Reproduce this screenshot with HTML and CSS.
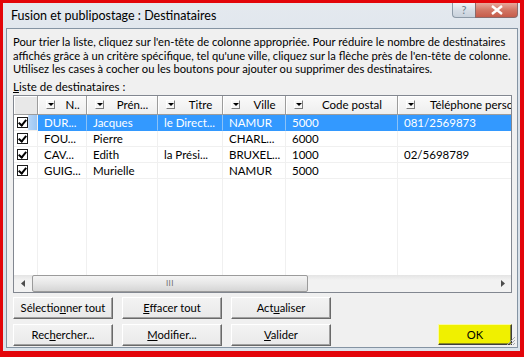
FILE: index.html
```html
<!DOCTYPE html>
<html lang="fr">
<head>
    <meta charset="UTF-8">
    <title>Fusion et publipostage : Destinataires</title>
    <link rel="stylesheet" href="styles.css">
</head>
<body>
    <div class="screen">
        <div class="window">
            <div class="titlebar">
                <span class="title">Fusion et publipostage : Destinataires</span>
                <div class="caption-buttons">
                    <span class="cap-help">?</span>
                    <span class="cap-close">
                        <svg width="12" height="10" viewBox="0 0 12 10"><path d="M1 1 L11 9 M11 1 L1 9" stroke="#fff" stroke-width="2.4" fill="none"/></svg>
                    </span>
                </div>
            </div>

            <div class="client">
                <p class="intro">
                    Pour trier la liste, cliquez sur l'en-tête de colonne appropriée. Pour réduire le nombre de destinataires<br>
                    affichés grâce à un critère spécifique, tel qu'une ville, cliquez sur la flèche près de l'en-tête de colonne.<br>
                    Utilisez les cases à cocher ou les boutons pour ajouter ou supprimer des destinataires.
                </p>
                <div class="list-label"><u>L</u>iste de destinataires :</div>

                <div class="listview">
                    <div class="grid">
                        <div class="th th-check"></div>
                        <div class="th"><span class="dd"></span><span class="th-label">N..</span></div>
                        <div class="th"><span class="dd"></span><span class="th-label">Prén...</span></div>
                        <div class="th"><span class="dd"></span><span class="th-label">Titre</span></div>
                        <div class="th"><span class="dd"></span><span class="th-label">Ville</span></div>
                        <div class="th"><span class="dd"></span><span class="th-label">Code postal</span></div>
                        <div class="th th-last"><span class="dd"></span><span class="th-label left">Téléphone perso</span></div>

                        <div class="td check sel-check"><span class="box"></span></div>
                        <div class="td sel">DUR...</div>
                        <div class="td sel">Jacques</div>
                        <div class="td sel">le Direct...</div>
                        <div class="td sel">NAMUR</div>
                        <div class="td sel">5000</div>
                        <div class="td sel">081/2569873</div>

                        <div class="td check"><span class="box"></span></div>
                        <div class="td">FOU...</div>
                        <div class="td">Pierre</div>
                        <div class="td"></div>
                        <div class="td">CHARL...</div>
                        <div class="td">6000</div>
                        <div class="td"></div>

                        <div class="td check"><span class="box"></span></div>
                        <div class="td">CAV...</div>
                        <div class="td">Edith</div>
                        <div class="td">la Prési...</div>
                        <div class="td">BRUXEL...</div>
                        <div class="td">1000</div>
                        <div class="td">02/5698789</div>

                        <div class="td check"><span class="box"></span></div>
                        <div class="td">GUIG...</div>
                        <div class="td">Murielle</div>
                        <div class="td"></div>
                        <div class="td">NAMUR</div>
                        <div class="td">5000</div>
                        <div class="td"></div>

                        <div class="fill"></div>
                        <div class="fill"></div>
                        <div class="fill"></div>
                        <div class="fill"></div>
                        <div class="fill"></div>
                        <div class="fill"></div>
                        <div class="fill"></div>
                    </div>

                    <div class="hscroll">
                        <span class="arrow">
                            <svg width="4" height="7" viewBox="0 0 4 7"><path d="M4 0 L0 3.5 L4 7 Z" fill="#4d4d4d"/></svg>
                        </span>
                        <div class="track">
                            <div class="thumb"><span class="grip-lines">III</span></div>
                        </div>
                        <span class="arrow">
                            <svg width="4" height="7" viewBox="0 0 4 7"><path d="M0 0 L4 3.5 L0 7 Z" fill="#4d4d4d"/></svg>
                        </span>
                    </div>
                </div>

                <div class="actions">
                    <div class="btn-grid">
                        <button class="btn">Sélectio<u>n</u>ner tout</button>
                        <button class="btn"><u>E</u>ffacer tout</button>
                        <button class="btn">Act<u>u</u>aliser</button>
                        <button class="btn">Rec<u>h</u>ercher...</button>
                        <button class="btn"><u>M</u>odifier...</button>
                        <button class="btn"><u>V</u>alider</button>
                    </div>
                    <button class="btn ok">OK</button>
                </div>

                <svg class="size-grip" width="10" height="10" viewBox="0 0 10 10">
                    <path d="M9 1 L1 9 M9 4 L4 9 M9 7 L7 9" stroke="#a8a8a8" stroke-width="1" fill="none"/>
                </svg>
            </div>
        </div>
    </div>
</body>
</html>
```

FILE: styles.css
```css
* {
    margin: 0;
    padding: 0;
    box-sizing: border-box;
}

body {
    width: 524px;
    height: 357px;
    overflow: hidden;
    font-family: Lato, "Liberation Sans", sans-serif;
    font-size: 11.5px;
    color: #000;
}

.screen {
    height: 357px;
    background: #e3050a;
    padding: 3px 4px 6px 3px;
}

.window {
    height: 100%;
    display: flex;
    flex-direction: column;
    padding: 0 2px 3px 3px;
    background: linear-gradient(180deg, #e4e9ef 0%, #d6dfe8 40%, #dbe3eb 100%);
}

/* title bar */
.titlebar {
    height: 25px;
    flex: none;
    display: flex;
    align-items: flex-start;
}

.title {
    padding: 5px 0 0 5px;
    font-size: 12.5px;
    color: #000;
}

.caption-buttons {
    margin-left: auto;
    display: flex;
}

.cap-help {
    width: 23px;
    height: 15px;
    border: 1px solid #8d9aa7;
    border-right: none;
    border-top: none;
    border-radius: 0 0 0 4px;
    background: linear-gradient(180deg, #f1f4f7, #d7dee6 50%, #c9d2dc);
    color: #6b7a8a;
    font-size: 11px;
    text-align: center;
    line-height: 14px;
}

.cap-close {
    width: 43px;
    height: 15px;
    border: 1px solid #8a6a6a;
    border-top: none;
    border-radius: 0 0 4px 0;
    background: linear-gradient(180deg, #e7a89c, #d27765 50%, #c65c4a);
    display: flex;
    align-items: center;
    justify-content: center;
}

/* client area */
.client {
    flex: 1;
    position: relative;
    display: flex;
    flex-direction: column;
    background: #f0f0f0;
    border: 1px solid #8594a3;
    padding: 6px 5px 0 6px;
}

.intro {
    font-size: 11.2px;
    line-height: 13.5px;
    white-space: nowrap;
}

.list-label {
    margin-top: 4px;
    line-height: 13px;
}

/* list view */
.listview {
    margin-top: 2px;
    height: 198px;
    flex: none;
    border: 1px solid #828790;
    background: #fff;
    display: flex;
    flex-direction: column;
}

.grid {
    flex: 1;
    display: grid;
    grid-template-columns: 24px 49px 71px 65px 63px 112px 140px;
    grid-template-rows: 19px repeat(4, 16px) 1fr;
    overflow: hidden;
}

.th {
    display: flex;
    align-items: center;
    padding-left: 8px;
    background: linear-gradient(180deg, #fafafa, #eeeeee);
    border-right: 1px solid #9c9c9c;
    border-bottom: 1px solid #9c9c9c;
    box-shadow: inset 1px 1px #fff;
    white-space: nowrap;
    overflow: hidden;
}

.th-check {
    background: #e8e8e8;
}

.th-last {
    border-right: none;
}

.dd {
    flex: none;
    width: 9px;
    height: 9px;
    border: 1px solid;
    border-color: #fff #7a7a7a #7a7a7a #fff;
    background: #f6f6f6;
    position: relative;
}

.dd::after {
    content: "";
    position: absolute;
    left: 1px;
    top: 2px;
    border-left: 3px solid transparent;
    border-right: 3px solid transparent;
    border-top: 3px solid #000;
}

.th-label {
    flex: 1;
    text-align: center;
    padding-left: 4px;
}

.th-label.left {
    text-align: left;
    padding-left: 15px;
}

.td {
    padding-left: 6px;
    line-height: 15px;
    white-space: nowrap;
    overflow: hidden;
    border-right: 1px solid #f0f0f0;
    border-bottom: 1px solid #f0f0f0;
}

.td.sel {
    background: #3399ff;
    color: #fff;
    border-color: #3399ff;
    border-right-color: #8cc2f7;
}

.check {
    padding-left: 3px;
    display: flex;
    align-items: center;
}

.sel-check {
    background: linear-gradient(90deg, #fff 60%, #b5d5f7 64%, #9cc6f3);
}

.box {
    width: 11px;
    height: 11px;
    border: 1px solid #1c1c1c;
    background: #fff;
    position: relative;
}

.box::after {
    content: "";
    position: absolute;
    left: 2px;
    top: 0px;
    width: 3px;
    height: 6px;
    border-right: 2px solid #000;
    border-bottom: 2px solid #000;
    transform: rotate(40deg);
}

.fill {
    border-right: 1px solid #f0f0f0;
}

/* horizontal scrollbar */
.hscroll {
    height: 17px;
    flex: none;
    display: flex;
    background: linear-gradient(180deg, #e4e4e4, #f2f2f2 30%, #f2f2f2);
}

.arrow {
    width: 17px;
    display: flex;
    align-items: center;
    justify-content: center;
}

.track {
    flex: 1;
    padding: 0 0 0 1px;
}

.thumb {
    width: 276px;
    height: 17px;
    border: 1px solid #9b9b9b;
    border-radius: 2px;
    background: linear-gradient(180deg, #f4f4f4, #e7e7e7 50%, #d5d5d5);
    display: flex;
    align-items: center;
    justify-content: center;
}

.grip-lines {
    font-size: 8px;
    color: #6f6f6f;
    letter-spacing: 0.5px;
}

/* buttons */
.actions {
    margin-top: 4px;
    display: flex;
    align-items: flex-end;
}

.btn-grid {
    display: grid;
    grid-template-columns: repeat(3, 100px);
    grid-auto-rows: 22px;
    gap: 5px 9px;
}

.btn {
    font-family: inherit;
    font-size: 11.2px;
    color: #000;
    background: linear-gradient(180deg, #f3f3f3, #e9e9e9);
    border: 1px solid;
    border-color: #fff #696969 #696969 #fff;
    box-shadow: inset -1px -1px #a0a0a0;
}

.ok {
    margin-left: auto;
    width: 74px;
    height: 21px;
    margin-bottom: 1px;
    background: #f0f000;
    border-color: #fbfb9c #3c3c3c #3c3c3c #fbfb9c;
    box-shadow: inset -1px -1px #8a8a20;
}

.size-grip {
    position: absolute;
    right: 1px;
    bottom: 1px;
}
```
